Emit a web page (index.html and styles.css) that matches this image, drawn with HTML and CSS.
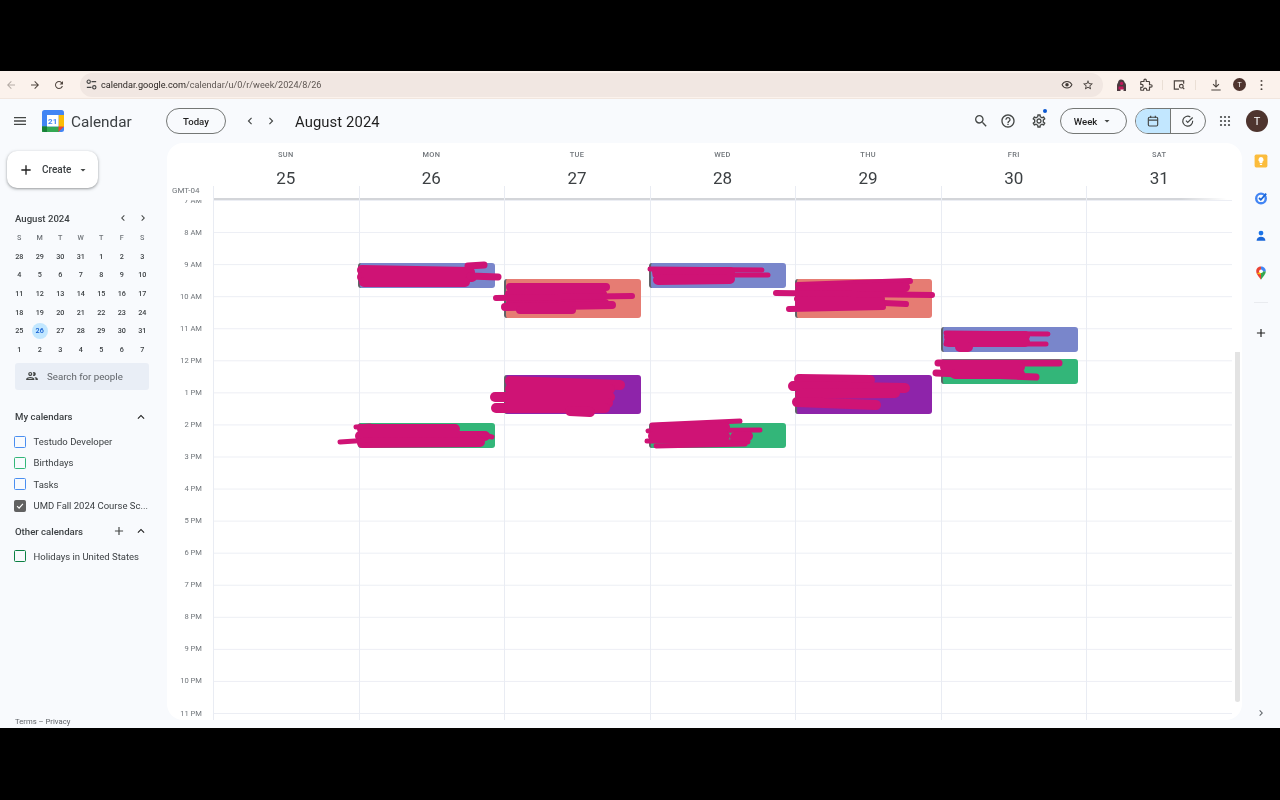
FILE: index.html
```html
<!DOCTYPE html>
<html lang="en">
<head>
<meta charset="utf-8">
<title>Google Calendar - August 2024</title>
<link rel="stylesheet" href="styles.css">
</head>
<body>
<svg width="0" height="0" class="defs">
  <defs>
    <symbol id="chev-l" viewBox="0 0 24 24"><path d="M15.41 7.41 14 6l-6 6 6 6 1.41-1.41L10.83 12z"/></symbol>
    <symbol id="chev-r" viewBox="0 0 24 24"><path d="M10 6 8.59 7.41 13.17 12l-4.58 4.58L10 18l6-6z"/></symbol>
    <symbol id="chev-u" viewBox="0 0 24 24"><path d="M7.41 15.41 12 10.83l4.59 4.58L18 14l-6-6-6 6z"/></symbol>
    <symbol id="plus" viewBox="0 0 24 24"><path d="M19 13h-6v6h-2v-6H5v-2h6V5h2v6h6v2z"/></symbol>
    <symbol id="caret" viewBox="0 0 24 24"><path d="M7 10l5 5 5-5z"/></symbol>
  </defs>
</svg>
<div class="screen">
  <div class="letterbox-top"></div>

  <div class="browser">
    <svg class="b-ic faded" viewBox="0 0 24 24"><path d="M20 11H7.83l5.59-5.59L12 4l-8 8 8 8 1.41-1.41L7.83 13H20v-2z"/></svg>
    <svg class="b-ic" viewBox="0 0 24 24"><path d="M12 4l-1.41 1.41L16.17 11H4v2h12.17l-5.58 5.59L12 20l8-8z"/></svg>
    <svg class="b-ic" viewBox="0 0 24 24"><path d="M17.65 6.35A7.958 7.958 0 0 0 12 4c-4.42 0-7.99 3.58-7.99 8s3.57 8 7.99 8c3.73 0 6.84-2.55 7.73-6h-2.08A5.99 5.99 0 0 1 12 18c-3.31 0-6-2.69-6-6s2.69-6 6-6c1.66 0 3.14.69 4.22 1.78L13 11h7V4l-2.35 2.35z"/></svg>
    <div class="omnibox">
      <svg class="tune" viewBox="0 0 14 14"><circle cx="4" cy="4" r="1.8" fill="none" stroke="#444" stroke-width="1.2"/><path d="M7 4h5M2 10h5" stroke="#444" stroke-width="1.3"/><circle cx="10" cy="10" r="1.8" fill="none" stroke="#444" stroke-width="1.2"/></svg>
      <span class="url"><b>calendar.google.com</b>/calendar/u/0/r/week/2024/8/26</span>
      <svg class="omni-eye" viewBox="0 0 24 24"><path d="M12 6a9.77 9.77 0 0 1 8.82 5.5A9.77 9.77 0 0 1 12 17a9.77 9.77 0 0 1-8.82-5.5A9.77 9.77 0 0 1 12 6m0-2C7 4 2.73 7.11 1 11.5 2.73 15.89 7 19 12 19s9.27-3.11 11-7.5C21.27 7.11 17 4 12 4zm0 4a3.5 3.5 0 1 1 0 7 3.5 3.5 0 0 1 0-7z"/></svg>
      <svg class="omni-star" viewBox="0 0 24 24"><path d="M22 9.24l-7.19-.62L12 2 9.19 8.63 2 9.24l5.46 4.73L5.82 21 12 17.27 18.18 21l-1.63-7.03L22 9.24zM12 15.4l-3.76 2.27 1-4.28-3.32-2.88 4.38-.38L12 6.1l1.71 4.04 4.38.38-3.32 2.88 1 4.28L12 15.4z"/></svg>
    </div>
    <div class="b-tools">
      <svg class="b-ext" viewBox="0 0 14 14"><path d="M3 13V7.5a4 4 0 0 1 1-2.8A3.5 3.5 0 0 1 7 1.5a3.6 3.6 0 0 1 3.5 2.8c1 .8 1.5 2 1.5 3.2V13H9.5v-2h-3v2z" fill="#4a3a3f"/><path d="M4.5 8.5h5v3h-5z" fill="#c2185b"/><circle cx="7.6" cy="5.4" r="1.6" fill="#c2185b"/></svg>
      <svg class="b-ext puzzle" viewBox="0 0 24 24"><path d="M20.5 11.5H18V7a1 1 0 0 0-1-1h-4.5V3.8a2 2 0 0 0-4 0V6H4a1 1 0 0 0-1 1v3.8h1.4a2.7 2.7 0 0 1 0 5.4H3V20a1 1 0 0 0 1 1h3.8v-1a2.7 2.7 0 0 1 5.4 0v1H17a1 1 0 0 0 1-1v-4.500h2.500a2 2 0 0 0 0-4z"/></svg>
      <span class="b-sep"></span>
      <svg class="b-ext puzzle" viewBox="0 0 24 24"><path d="M14 5H4v14h8M14 5h6v5"/><circle cx="16" cy="14" r="3.2"/><path d="M18.4 16.4 21 19"/></svg>
      <span class="b-sep"></span>
      <svg class="b-ext puzzle dl" viewBox="0 0 24 24"><path d="M12 3v12M7 10.5l5 5 5-5M4 20.5h16"/></svg>
      <span class="b-avatar">T</span>
      <svg class="b-kebab" viewBox="0 0 6 16"><circle cx="3" cy="2.5" r="1.3"/><circle cx="3" cy="8" r="1.3"/><circle cx="3" cy="13.5" r="1.3"/></svg>
    </div>
  </div>

  <div class="app">
    <header class="topbar">
      <svg class="ic menu" viewBox="0 0 24 24"><path d="M3 18h18v-2H3v2zm0-5h18v-2H3v2zm0-7v2h18V6H3z"/></svg>
      <svg class="logo" viewBox="0 0 22 22">
        <rect x="0" y="0" width="22" height="22" rx="2.5" fill="#4285f4"/>
        <rect x="16.5" y="5" width="5.5" height="12" fill="#fbbc04"/>
        <rect x="0" y="16.5" width="17" height="5.5" fill="#34a853"/>
        <path d="M16.5 16.5H22L16.5 22z" fill="#ea4335"/>
        <path d="M0 16.5h5V22H2.5A2.5 2.5 0 0 1 0 19.5z" fill="#188038"/>
        <rect x="5" y="5" width="11.5" height="11.5" fill="#fff"/>
        <text x="10.7" y="14" class="logo-num">21</text>
      </svg>
      <span class="brand">Calendar</span>
      <button class="pill today">Today</button>
      <svg class="ic nav first" viewBox="0 0 24 24"><use href="#chev-l"/></svg>
      <svg class="ic nav" viewBox="0 0 24 24"><use href="#chev-r"/></svg>
      <h1 class="period">August 2024</h1>
      <div class="top-right">
        <svg class="ic act" viewBox="0 0 24 24"><path d="M15.5 14h-.79l-.28-.27A6.471 6.471 0 0 0 16 9.5 6.5 6.5 0 1 0 9.5 16c1.61 0 3.09-.59 4.23-1.57l.27.28v.79l5 4.99L20.49 19l-4.99-5zm-6 0C7.01 14 5 11.99 5 9.5S7.01 5 9.5 5 14 7.01 14 9.5 11.99 14 9.5 14z"/></svg>
        <svg class="ic act" viewBox="0 0 24 24"><path d="M11 18h2v-2h-2v2zm1-16C6.48 2 2 6.48 2 12s4.48 10 10 10 10-4.48 10-10S17.52 2 12 2zm0 18c-4.41 0-8-3.59-8-8s3.59-8 8-8 8 3.59 8 8-3.59 8-8 8zm0-14c-2.21 0-4 1.79-4 4h2c0-1.1.9-2 2-2s2 .9 2 2c0 2-3 1.75-3 5h2c0-2.25 3-2.5 3-5 0-2.21-1.79-4-4-4z"/></svg>
        <span class="gear-wrap">
          <svg class="ic act" viewBox="0 0 24 24"><path d="M19.43 12.98c.04-.32.07-.64.07-.98 0-.34-.03-.66-.07-.98l2.11-1.65c.19-.15.24-.42.12-.64l-2-3.46c-.09-.16-.26-.25-.44-.25-.06 0-.12.01-.17.03l-2.49 1c-.52-.4-1.08-.73-1.69-.98l-.38-2.65C14.46 2.18 14.25 2 14 2h-4c-.25 0-.46.18-.49.42l-.38 2.65c-.61.25-1.17.59-1.69.98l-2.49-1c-.06-.02-.12-.03-.18-.03-.17 0-.34.09-.43.25l-2 3.46c-.13.22-.07.49.12.64l2.11 1.65c-.04.32-.07.65-.07.98 0 .33.03.66.07.98l-2.11 1.65c-.19.15-.24.42-.12.64l2 3.46c.09.16.26.25.44.25.06 0 .12-.01.17-.03l2.49-1c.52.4 1.08.73 1.69.98l.38 2.65c.03.24.24.42.49.42h4c.25 0 .46-.18.49-.42l.38-2.65c.61-.25 1.17-.59 1.69-.98l2.49 1c.06.02.12.03.18.03.17 0 .34-.09.43-.25l2-3.46c.12-.22.07-.49-.12-.64l-2.11-1.65zm-1.98-1.71c.04.31.05.52.05.73 0 .21-.02.43-.05.73l-.14 1.13.89.7 1.08.84-.7 1.21-1.27-.51-1.04-.42-.9.68c-.43.32-.84.56-1.25.73l-1.06.43-.16 1.13-.2 1.35h-1.4l-.19-1.35-.16-1.13-1.06-.43c-.43-.18-.83-.41-1.23-.71l-.91-.7-1.06.43-1.27.51-.7-1.21 1.08-.84.89-.7-.14-1.13c-.03-.31-.05-.54-.05-.74s.02-.43.05-.73l.14-1.13-.89-.7-1.08-.84.7-1.21 1.27.51 1.04.42.9-.68c.43-.32.84-.56 1.25-.73l1.06-.43.16-1.13.2-1.35h1.39l.19 1.35.16 1.13 1.06.43c.43.18.83.41 1.23.71l.91.7 1.06-.43 1.27-.51.7 1.21-1.07.85-.89.7.14 1.13zM12 8c-2.21 0-4 1.79-4 4s1.79 4 4 4 4-1.79 4-4-1.79-4-4-4zm0 6c-1.1 0-2-.9-2-2s.9-2 2-2 2 .9 2 2-.9 2-2 2z"/></svg>
          <span class="gear-dot"></span>
        </span>
        <button class="pill week">Week<svg class="caret" viewBox="0 0 24 24"><use href="#caret"/></svg></button>
        <div class="toggle">
          <span class="tog on"><svg class="tog-ic" viewBox="0 0 24 24"><rect x="4" y="5.5" width="16" height="15" rx="2"/><path d="M4 10.500h16M8 3v4M16 3v4"/></svg></span>
          <span class="tog"><svg class="tog-ic" viewBox="0 0 24 24"><path d="M20 11.500A8.500 8.500 0 1 1 16 5"/><path d="M8.500 11.500l3 3L20 6"/></svg></span>
        </div>
        <svg class="apps" viewBox="0 0 12 12"><circle cx="2" cy="2" r="1.1"/><circle cx="6" cy="2" r="1.1"/><circle cx="10" cy="2" r="1.1"/><circle cx="2" cy="6" r="1.1"/><circle cx="6" cy="6" r="1.1"/><circle cx="10" cy="6" r="1.1"/><circle cx="2" cy="10" r="1.1"/><circle cx="6" cy="10" r="1.1"/><circle cx="10" cy="10" r="1.1"/></svg>
        <span class="avatar">T</span>
      </div>
    </header>

    <div class="body">
      <aside class="sidebar">
        <button class="create"><svg class="create-plus" viewBox="0 0 24 24"><use href="#plus"/></svg><span>Create</span><svg class="caret" viewBox="0 0 24 24"><use href="#caret"/></svg></button>

        <div class="mini-head">
          <span class="mini-title">August 2024</span>
          <svg class="mini-nav" viewBox="0 0 24 24"><use href="#chev-l"/></svg>
          <svg class="mini-nav" viewBox="0 0 24 24"><use href="#chev-r"/></svg>
        </div>
        <div class="mini-grid">
          <span class="dow">S</span><span class="dow">M</span><span class="dow">T</span><span class="dow">W</span><span class="dow">T</span><span class="dow">F</span><span class="dow">S</span>
          <span>28</span><span>29</span><span>30</span><span>31</span><span>1</span><span>2</span><span>3</span>
          <span>4</span><span>5</span><span>6</span><span>7</span><span>8</span><span>9</span><span>10</span>
          <span>11</span><span>12</span><span>13</span><span>14</span><span>15</span><span>16</span><span>17</span>
          <span>18</span><span>19</span><span>20</span><span>21</span><span>22</span><span>23</span><span>24</span>
          <span>25</span><span class="sel">26</span><span>27</span><span>28</span><span>29</span><span>30</span><span>31</span>
          <span>1</span><span>2</span><span>3</span><span>4</span><span>5</span><span>6</span><span>7</span>
        </div>

        <div class="people">
          <svg class="people-ic" viewBox="0 0 24 24"><path d="M9 13.75c-2.34 0-7 1.17-7 3.5V19h14v-1.75c0-2.33-4.66-3.5-7-3.5zM4.34 17c.84-.58 2.87-1.25 4.66-1.25s3.82.67 4.66 1.25H4.34zM9 12c1.93 0 3.5-1.57 3.5-3.5S10.93 5 9 5 5.5 6.57 5.5 8.5 7.07 12 9 12zm0-5c.83 0 1.5.67 1.5 1.5S9.83 10 9 10s-1.5-.67-1.5-1.5S8.17 7 9 7zm7.04 6.81c1.16.84 1.96 1.96 1.96 3.44V19h4v-1.75c0-2.02-3.5-3.17-5.96-3.44zM15 12c1.93 0 3.5-1.57 3.5-3.5S16.93 5 15 5c-.54 0-1.04.13-1.5.35.63.89 1 1.98 1 3.15s-.37 2.26-1 3.15c.46.22.96.35 1.5.35z"/></svg>
          <span>Search for people</span>
        </div>

        <div class="section-head my">
          <span class="section-title">My calendars</span>
          <svg class="sec-ic" viewBox="0 0 24 24"><use href="#chev-u"/></svg>
        </div>
        <ul class="cal-list">
          <li><span class="box blue"></span><span class="cal-name">Testudo Developer</span></li>
          <li><span class="box mint"></span><span class="cal-name">Birthdays</span></li>
          <li><span class="box blue"></span><span class="cal-name">Tasks</span></li>
          <li><span class="box checked"><svg viewBox="0 0 12 12"><path d="M2.5 6.2l2.4 2.3 4.6-5" fill="none" stroke="#fff" stroke-width="1.4"/></svg></span><span class="cal-name">UMD Fall 2024 Course Sc...</span></li>
        </ul>
        <div class="section-head other">
          <span class="section-title">Other calendars</span>
          <svg class="sec-plus" viewBox="0 0 24 24"><use href="#plus"/></svg>
          <svg class="sec-ic" viewBox="0 0 24 24"><use href="#chev-u"/></svg>
        </div>
        <ul class="cal-list">
          <li><span class="box green"></span><span class="cal-name">Holidays in United States</span></li>
        </ul>
        <div class="terms">Terms – Privacy</div>
      </aside>

      <main class="card">
        <div class="week-head">
          <div class="tz">GMT-04</div>
          <div class="head-days">
            <div class="hd"><span class="hd-name">SUN</span><span class="hd-num">25</span></div>
            <div class="hd"><span class="hd-name">MON</span><span class="hd-num">26</span></div>
            <div class="hd"><span class="hd-name">TUE</span><span class="hd-num">27</span></div>
            <div class="hd"><span class="hd-name">WED</span><span class="hd-num">28</span></div>
            <div class="hd"><span class="hd-name">THU</span><span class="hd-num">29</span></div>
            <div class="hd"><span class="hd-name">FRI</span><span class="hd-num">30</span></div>
            <div class="hd"><span class="hd-name">SAT</span><span class="hd-num">31</span></div>
          </div>
        </div>
        <div class="week-body">
          <div class="times">
            <span>7 AM</span><span>8 AM</span><span>9 AM</span><span>10 AM</span><span>11 AM</span><span>12 PM</span><span>1 PM</span><span>2 PM</span><span>3 PM</span><span>4 PM</span><span>5 PM</span><span>6 PM</span><span>7 PM</span><span>8 PM</span><span>9 PM</span><span>10 PM</span><span>11 PM</span>
          </div>
          <div class="days">
            <div class="day"></div>
            <div class="day">
              <div class="ev ev-blue at-9"></div>
              <div class="ev ev-green at-14"></div>
            </div>
            <div class="day">
              <div class="ev ev-salmon at-10 tall"></div>
              <div class="ev ev-purple at-13 tall"></div>
            </div>
            <div class="day">
              <div class="ev ev-blue at-9"></div>
              <div class="ev ev-green at-14"></div>
            </div>
            <div class="day">
              <div class="ev ev-salmon at-10 tall"></div>
              <div class="ev ev-purple at-13 tall"></div>
            </div>
            <div class="day">
              <div class="ev ev-blue at-11"></div>
              <div class="ev ev-green at-12"></div>
            </div>
            <div class="day"></div>
          </div>
          <div class="scrollbar"></div>
        </div>
      </main>

      <aside class="rail">
        <svg class="rail-ic" viewBox="0 0 20 20"><rect x="2" y="2" width="16" height="16" rx="2" fill="#fbbc3c"/><path d="M10 5a3.3 3.3 0 0 0-1.8 6v1.5h3.6V11A3.3 3.3 0 0 0 10 5zM8.6 13.4h2.8V15H8.6z" fill="#fff"/></svg>
        <svg class="rail-ic" viewBox="0 0 20 20"><circle cx="10" cy="10.5" r="6" fill="none" stroke="#4285f4" stroke-width="3"/><path d="M7.5 10l2.3 2.2L16.5 4.5" fill="none" stroke="#1a66d8" stroke-width="2.2"/></svg>
        <svg class="rail-ic" viewBox="0 0 20 20"><circle cx="10" cy="6.3" r="3" fill="#1a73e8"/><path d="M4.5 16c0-3.5 2.5-5.2 5.500-5.200s5.500 1.700 5.500 5.200z" fill="#1a66d8"/></svg>
        <svg class="rail-ic" viewBox="0 0 20 20"><path d="M10 18.500C8.500 15.500 4 12 4 7.800 4 4.500 6.700 2 10 2z" fill="#ea4335"/><path d="M10 18.500c1.500-3 6-6.500 6-10.700h-6z" fill="#34a853"/><path d="M10 2c3.300 0 6 2.500 6 5.800h-6z" fill="#4285f4"/><path d="M4.800 11 10 7.800v4z" fill="#fbbc04"/><circle cx="10" cy="7.800" r="2.300" fill="#fff"/></svg>
        <span class="rail-sep"></span>
        <svg class="rail-plus" viewBox="0 0 24 24"><use href="#plus"/></svg>
        <svg class="rail-chev" viewBox="0 0 24 24"><use href="#chev-r"/></svg>
      </aside>
    </div>
  </div>
  <div class="letterbox-bottom"></div>

  <svg class="scribble" viewBox="0 0 1280 800" fill="none" stroke-linecap="round" stroke-linejoin="round">
    <g class="s9"><path d="M362 270 L470 272"/><path d="M362 277 L472 277"/><path d="M364 282 L465 282"/></g>
    <g class="s4"><path d="M468 266 L484 265"/><path d="M470 276 L498 277"/></g>
    <g class="s8"><path d="M510 287 L606 287"/><path d="M509 294 L603 294"/><path d="M510 303 L605 303"/><path d="M505 307 L612 305"/><path d="M520 310 L572 310"/></g>
    <g class="s6"><path d="M496 298 L632 296"/></g>
    <g class="s9"><path d="M510 381 L620 385"/><path d="M510 389 L610 389"/><path d="M495 397 L610 397"/><path d="M510 403 L608 403"/><path d="M496 408 L605 408"/><path d="M570 411 L590 412"/></g>
    <g class="s9"><path d="M362 429 L455 429"/><path d="M360 436 L485 436"/><path d="M362 443 L480 442"/></g>
    <g class="s5"><path d="M340 442 L370 440"/><path d="M480 434 L492 437"/><path d="M356 427 L370 426"/></g>
    <g class="s5"><path d="M650 269 L762 270"/><path d="M655 275 L768 275"/></g>
    <g class="s9"><path d="M657 272 L730 272"/><path d="M658 280 L730 279"/></g>
    <g class="s6"><path d="M798 285 L910 281"/><path d="M797 299 L906 304"/><path d="M789 309 L883 307"/></g>
    <g class="s9"><path d="M800 290 L905 287"/><path d="M800 299 L880 299"/><path d="M800 304 L880 304"/></g>
    <g class="s6"><path d="M776 293 L932 295"/></g>
    <g class="s5"><path d="M946 333 L1048 334"/><path d="M946 344 L1046 344"/></g>
    <g class="s9"><path d="M949 337 L1025 336"/><path d="M949 342 L1025 342"/><path d="M960 347 L968 347"/></g>
    <g class="s7"><path d="M938 363 L1059 363"/><path d="M936 373 L1036 377"/></g>
    <g class="s9"><path d="M945 367 L1020 367"/><path d="M955 374 L1020 374"/></g>
    <g class="s9"><path d="M799 379 L870 380"/><path d="M793 386 L905 388"/><path d="M800 394 L895 393"/><path d="M797 402 L876 405"/></g>
    <g class="s5"><path d="M652 425 L740 421"/><path d="M648 431 L760 430"/><path d="M647 441 L748 442"/><path d="M656 446 L745 444"/></g>
    <g class="s9"><path d="M655 428 L725 427"/><path d="M653 436 L725 436"/><path d="M735 437 L748 436"/></g>
  </svg>
</div>
</body>
</html>
```
FILE: styles.css
```css
* { box-sizing: border-box; }
html, body { margin: 0; padding: 0; background: #000; }
body { font-family: "Roboto", "Liberation Sans", sans-serif; color: #3c4043; overflow: hidden; }
.defs { position: absolute; }
.screen { position: relative; width: 1280px; height: 800px; display: flex; flex-direction: column; background: #000; filter: blur(.3px); }
.letterbox-top { height: 71px; flex: none; }
.letterbox-bottom { height: 72px; flex: none; }

/* browser chrome */
.browser { height: 28px; flex: none; background: #fbf2ec; border-bottom: 1px solid #f1e6de; display: flex; align-items: center; padding-left: 5px; }
.b-ic { width: 12px; height: 12px; fill: #50463f; margin-right: 12px; flex: none; }
.b-ic.faded { fill: #b5aca6; }
.omnibox { width: 1023px; height: 24px; margin-left: 3px; border-radius: 12px; background: #f1e7e2; display: flex; align-items: center; padding-left: 4px; padding-right: 9px; }
.b-ic + .omnibox { margin-left: 3px; }
.tune { width: 13px; height: 13px; flex: none; margin-left: 1px; }
.url { margin-left: 3px; font-size: 9.15px; color: #5f5753; flex: 1; white-space: nowrap; }
.url b { font-weight: 400; color: #2b2623; }
.omni-eye, .omni-star { width: 12px; height: 12px; fill: #403a36; flex: none; }
.omni-eye { margin-right: 9px; }
.b-tools { display: flex; align-items: center; margin-left: 11px; }
.b-ext { width: 14px; height: 14px; flex: none; }
.puzzle { fill: none; stroke: #4a423d; stroke-width: 2; margin-left: 11px; }
.b-sep { width: 1px; height: 10px; background: #eadfd5; margin-left: 9px; }
.b-sep + .puzzle { margin-left: 9px; }
.puzzle.dl { margin-left: 13px; }
.b-avatar { width: 13px; height: 13px; border-radius: 50%; background: #4e342e; color: #fff; font-size: 7px; display: flex; align-items: center; justify-content: center; margin-left: 10px; }
.b-kebab { width: 5px; height: 12px; fill: #4a423d; margin-left: 13px; }

/* app */
.app { flex: 1; min-height: 0; background: #f8fafd; display: flex; flex-direction: column; }
.topbar { height: 44px; flex: none; display: flex; align-items: center; padding-left: 12px; }
.ic { width: 16px; height: 16px; fill: #444746; flex: none; }
.logo { width: 22px; height: 22px; margin-left: 14px; flex: none; }
.logo-num { font: 700 8px "Roboto", sans-serif; fill: #4285f4; text-anchor: middle; }
.brand { font-size: 15.3px; color: #3c4043; margin-left: 7px; width: 95px; flex: none; padding-top: 1px; }
.pill { font-family: inherit; background: transparent; border: 1px solid #747775; border-radius: 13px; height: 26px; color: #1f1f1f; font-size: 9.6px; font-weight: 500; padding: 0; display: flex; align-items: center; justify-content: center; }
.today { width: 60px; }
.nav { width: 14px; height: 14px; margin-right: 7px; }
.nav.first { margin-left: 17px; }
.period { margin: 0 0 0 10px; padding-top: 1px; font-size: 14.8px; font-weight: 400; color: #1f1f1f; letter-spacing: .1px; }
.top-right { margin-left: auto; display: flex; align-items: center; padding-right: 12px; }
.act { width: 16px; height: 16px; margin-right: 12px; }
.top-right > .act:first-child { margin-right: 11px; }
.gear-wrap { position: relative; display: flex; }
.gear-wrap .act { margin-right: 13px; margin-left: 3px; }
.gear-dot { position: absolute; top: -4px; left: 15px; width: 4px; height: 4px; border-radius: 50%; background: #0b57d0; }
.week { width: 67px; gap: 4px; }
.caret { width: 12px; height: 12px; fill: #444746; }
.toggle { width: 71px; height: 26px; margin-left: 8px; border: 1px solid #747775; border-radius: 13px; display: flex; overflow: hidden; }
.tog { flex: 1; display: flex; align-items: center; justify-content: center; }
.tog.on { background: #c2e7ff; border-right: 1px solid #747775; }
.tog-ic { width: 14px; height: 14px; fill: none; stroke: #444746; stroke-width: 2; }
.apps { width: 12px; height: 12px; fill: #444746; margin-left: 13px; }
.avatar { width: 22px; height: 22px; border-radius: 50%; background: #4e342e; color: #fff; font-size: 11px; display: flex; align-items: center; justify-content: center; margin-left: 15px; }

.body { flex: 1; min-height: 0; display: flex; }

/* sidebar */
.sidebar { width: 167px; flex: none; position: relative; padding-left: 15px; }
.create { font-family: inherit; margin: 8px 0 0 -8px; width: 91px; height: 37px; border: 0; border-radius: 10px; background: #fff; box-shadow: 0 1px 2px rgba(60,64,67,.35), 0 1px 3px 1px rgba(60,64,67,.15); color: #3c4043; font-size: 10px; font-weight: 500; display: flex; align-items: center; padding: 0 0 0 11px; }
.create-plus { width: 16px; height: 16px; fill: #1f1f1f; margin-right: 8px; }
.create .caret { margin-left: 6px; }
.mini-head { display: flex; align-items: center; margin-top: 22px; height: 16px; width: 134px; }
.mini-title { font-size: 9.6px; font-weight: 500; color: #3c4043; flex: 1; }
.mini-nav { width: 12px; height: 12px; fill: #444746; margin-right: 8.5px; }
.mini-nav:last-child { margin-right: 0; margin-left: 0; }
.mini-grid { display: grid; grid-template-columns: repeat(7, 20.5px); grid-auto-rows: 18.7px; margin: 2px 0 0 -6px; font-size: 7.2px; font-weight: 500; color: #3c4043; }
.mini-grid span { display: flex; align-items: center; justify-content: center; }
.mini-grid .dow { color: #70757a; }
.mini-grid .sel { background: #c2e7ff; border-radius: 50%; width: 16px; height: 16px; margin: 1.4px 2.2px; color: #0b57d0; }
.people { width: 134px; height: 27px; margin-top: 4px; background: #e9eef6; border-radius: 3px; display: flex; align-items: center; padding-left: 10px; font-size: 9.7px; color: #5f6368; }
.people-ic { width: 14px; height: 14px; fill: #444746; margin-right: 8px; }
.section-head { width: 134px; display: flex; align-items: center; height: 16px; }
.section-head.my { margin-top: 19px; }
.section-head.other { margin-top: 7px; }
.section-title { flex: 1; font-size: 9.6px; font-weight: 500; color: #3c4043; }
.sec-ic { width: 14px; height: 14px; fill: #1f1f1f; margin-right: 1px; }
.sec-plus { width: 14px; height: 14px; fill: #444746; margin-right: 8px; }
.cal-list { list-style: none; margin: 6px 0 0; padding: 0; }
.cal-list li { display: flex; align-items: center; height: 21.4px; }
.box { width: 12px; height: 12px; border: 1.7px solid #4a8ef0; border-radius: 1.5px; flex: none; margin-left: -1px; margin-right: 7.5px; display: flex; }
.box.mint { border-color: #33b679; }
.box.green { border-color: #0b8043; }
.box.checked { background: #616161; border-color: #616161; }
.box.checked svg { width: 100%; height: 100%; }
.cal-name { font-size: 9.5px; color: #3c4043; white-space: nowrap; width: 116px; }
.terms { position: absolute; left: 15px; top: 574px; font-size: 7.7px; color: #5f6368; }

/* week card */
.card { width: 1075px; height: 577px; flex: none; background: #fff; border-radius: 16px; display: flex; flex-direction: column; overflow: hidden; }
.week-head { height: 57px; flex: none; display: flex; position: relative; }
.tz { width: 46px; flex: none; font-size: 8px; color: #70757a; padding: 42.5px 0 0 5px; white-space: nowrap; }
.head-days { width: 1019px; display: flex; background: linear-gradient(90deg, #d3d5d9 0, #d3d5d9 95%, rgba(211,213,217,0) 99.5%) 0 100% / 100% 2px no-repeat; }
.hd { flex: 1; display: flex; flex-direction: column; align-items: center; position: relative; }
.hd::before { content: ""; position: absolute; left: 0; bottom: 0; height: 14px; width: 1px; background: #e9ecf3; }
.hd-name { font-size: 7.4px; font-weight: 500; color: #70757a; margin-top: 7px; letter-spacing: .3px; }
.hd-num { font-size: 17px; color: #3c4043; margin-top: 9px; line-height: 20px; }
.week-body { flex: 1; min-height: 0; display: flex; position: relative; overflow: hidden; }
.times { width: 46px; flex: none; }
.times span { display: block; height: 32.07px; text-align: right; padding-right: 11px; font-size: 7.6px; color: #70757a; line-height: 9px; margin-top: 0; position: relative; top: -4.5px; }
.days { width: 1019px; display: flex; background: linear-gradient(#eceef4 1px, transparent 1px) 0 0 / 100% 32.07px; }
.day { flex: 1; position: relative; border-left: 1px solid #e9ecf3; }
.ev { position: absolute; left: -1.4px; width: 137px; height: 25px; border-radius: 3px; border-left: 2px solid #5f6368; }
.ev.tall { height: 39px; }
.ev-blue { background: #7986cb; }
.ev-salmon { background: #e67c73; }
.ev-purple { background: #8e24aa; }
.ev-green { background: #33b679; }
.at-9 { top: 63px; }
.at-10 { top: 79px; }
.at-11 { top: 127px; }
.at-12 { top: 159px; }
.at-13 { top: 175px; }
.at-14 { top: 223px; }
.scrollbar { position: absolute; left: 1068px; top: 152px; width: 5px; height: 350px; background: #e3e3e3; border-radius: 0 0 3px 3px; }

/* right rail */
.rail { flex: 1; position: relative; display: flex; flex-direction: column; align-items: center; padding-top: 10px; }
.rail-ic { width: 16px; height: 16px; flex: none; margin-bottom: 21.3px; }
.rail-sep { width: 14px; height: 1px; background: #e9ebef; margin-top: 0; flex: none; }
.rail-plus { width: 14px; height: 14px; fill: #1f1f1f; margin-top: 23px; }
.rail-chev { position: absolute; left: 13px; top: 564px; width: 12px; height: 12px; fill: #5f6368; }

/* redaction scribbles drawn over the page */
.scribble { position: absolute; left: 0; top: 0; width: 1280px; height: 800px; stroke: #cf1375; pointer-events: none; }
.s4 { stroke-width: 7px; }
.s5 { stroke-width: 5px; }
.s6 { stroke-width: 6px; }
.s7 { stroke-width: 7px; }
.s8 { stroke-width: 8px; }
.s9 { stroke-width: 10px; }
```
